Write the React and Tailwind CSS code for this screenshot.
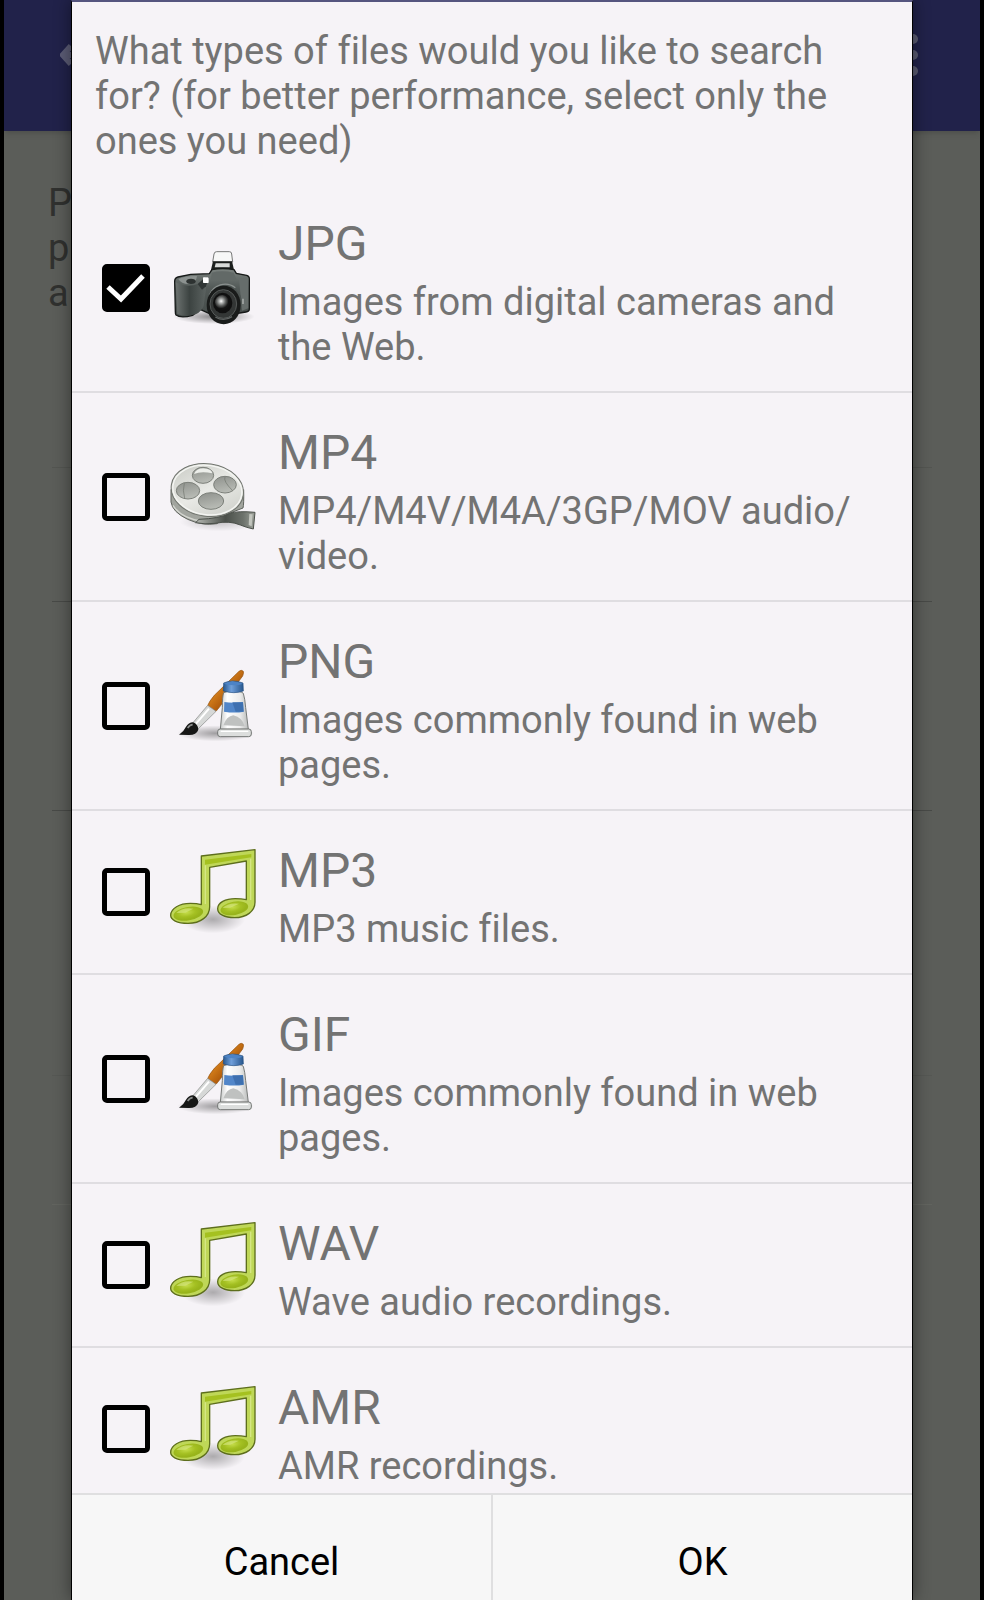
import { useState } from 'react'

const FILE_TYPES = [
  { id: 'jpg', name: 'JPG', icon: 'camera', description: 'Images from digital cameras and the Web.' },
  { id: 'mp4', name: 'MP4', icon: 'film', description: 'MP4/M4V/M4A/3GP/MOV audio/\u200bvideo.' },
  { id: 'png', name: 'PNG', icon: 'paint', description: 'Images commonly found in web pages.' },
  { id: 'mp3', name: 'MP3', icon: 'music', description: 'MP3 music files.' },
  { id: 'gif', name: 'GIF', icon: 'paint', description: 'Images commonly found in web pages.' },
  { id: 'wav', name: 'WAV', icon: 'music', description: 'Wave audio recordings.' },
  { id: 'amr', name: 'AMR', icon: 'music', description: 'AMR recordings.' },
]

function CameraIcon() {
  return (
    <svg viewBox="273 75 258 258" className="size-[86px] shrink-0" aria-hidden="true">
      <defs>
        <radialGradient id="cam-shadow">
          <stop offset="0" stopColor="#000" stopOpacity="0.45" />
          <stop offset="1" stopColor="#000" stopOpacity="0" />
        </radialGradient>
        <linearGradient id="cam-body" x1="0" x2="0" y1="0" y2="1">
          <stop offset="0" stopColor="#7b827f" />
          <stop offset="0.4" stopColor="#535a58" />
          <stop offset="1" stopColor="#444b49" />
        </linearGradient>
        <linearGradient id="cam-grip" x1="0" x2="1" y1="0" y2="0">
          <stop offset="0" stopColor="#6d7371" />
          <stop offset="0.45" stopColor="#3c4341" />
          <stop offset="1" stopColor="#5c6361" />
        </linearGradient>
        <radialGradient id="cam-glass" cx="0.42" cy="0.42">
          <stop offset="0" stopColor="#fff" />
          <stop offset="0.25" stopColor="#b8bab9" />
          <stop offset="0.6" stopColor="#626463" />
          <stop offset="1" stopColor="#141414" />
        </radialGradient>
      </defs>
      <ellipse cx="405" cy="290" rx="122" ry="22" fill="url(#cam-shadow)" />
      <path d="M405 102q1-7 8-7h38q7 0 7 7l3 24h-60z" fill="#f7f7f7" stroke="#777" strokeWidth="3" />
      <path d="M402 124h57l7 30h-71z" fill="#1c1f1e" />
      <path d="M410 130h42v12h-45z" fill="#d8dad9" />
      <path
        d="M287 184q0-10 10-13l38-8 56-2 8-12q32-7 66 0l7 11 31 6q8 2 8 10v92q0 7-10 8l-38 6-60 4-40-18-22 18q-36 10-50-1-2-2-2-10z"
        fill="url(#cam-body)"
        stroke="#161918"
        strokeWidth="4"
      />
      <path d="M290 187q34 18 68 4l24 8-8 58q-8 19-24 26-32 8-55-1z" fill="url(#cam-grip)" />
      <path d="M298 177q20-10 56-9-2 20-20 24-26 2-36-15z" fill="#8c9290" />
      <ellipse cx="336" cy="184" rx="14" ry="8" fill="#2d3231" />
      <path d="M356 192l24-21h10l-9 28-12 10z" fill="#303635" />
      <path d="M398 158q30-8 66 0l9 21h-77z" fill="#626967" />
      <path d="M480 176l28-3v92l-19 7z" fill="#666d6b" />
      <path d="M492 236v16" stroke="#a3a8a6" strokeWidth="5" />
      <rect x="372" y="172" width="17" height="17" rx="2" fill="#fff" />
      <circle cx="436" cy="246" r="52" fill="#4c5351" />
      <path d="M391 226a50 50 0 0 1 78-23" fill="none" stroke="#8b918f" strokeWidth="4" />
      <ellipse cx="434" cy="255" rx="51" ry="58" fill="#191b1a" />
      <ellipse cx="433" cy="252" rx="40" ry="43" fill="#333635" stroke="#555958" strokeWidth="3" />
      <ellipse cx="431" cy="249" rx="29" ry="31" fill="#101010" />
      <circle cx="430" cy="247" r="22" fill="url(#cam-glass)" />
      <path d="M409 291q25 15 50-1" fill="none" stroke="#606463" strokeWidth="4" />
    </svg>
  )
}

function FilmIcon() {
  return (
    <svg viewBox="273 72 258 258" className="size-[86px] shrink-0" aria-hidden="true">
      <defs>
        <linearGradient id="film-face" x1="0" x2="1" y1="0" y2="1">
          <stop offset="0" stopColor="#c6c8c2" />
          <stop offset="0.5" stopColor="#e9eae6" />
          <stop offset="1" stopColor="#c9cbc5" />
        </linearGradient>
        <linearGradient id="film-hole" x1="0" x2="0.3" y1="0" y2="1">
          <stop offset="0" stopColor="#8e918c" />
          <stop offset="1" stopColor="#b7bab4" />
        </linearGradient>
        <linearGradient id="film-strip" x1="0" x2="1" y1="0" y2="0">
          <stop offset="0" stopColor="#b5b8b2" />
          <stop offset="0.5" stopColor="#4a4f49" />
          <stop offset="0.8" stopColor="#6d726c" />
          <stop offset="1" stopColor="#9b9f98" />
        </linearGradient>
        <radialGradient id="film-shadow">
          <stop offset="0" stopColor="#000" stopOpacity="0.2" />
          <stop offset="1" stopColor="#000" stopOpacity="0" />
        </radialGradient>
      </defs>
      <ellipse cx="420" cy="276" rx="118" ry="28" fill="url(#film-shadow)" />
      <path
        d="M276 178v38q4 30 50 52 44 20 88 13l34-30 44-17q3-10 2-55z"
        fill="#a2a59f"
        stroke="#60645e"
        strokeWidth="3"
      />
      <path d="M282 226q25 40 90 48" fill="none" stroke="#d4d6d0" strokeWidth="4" />
      <path
        d="M360 268q60-2 92-18 25-8 76-3l-5 50q-20-4-39-12-32-14-76-5-31 4-58-2z"
        fill="url(#film-strip)"
        stroke="#4b504a"
        strokeWidth="3"
      />
      <path d="M511 252l10 1-3 36-9-4z" fill="#c2c5be" />
      <ellipse
        cx="385"
        cy="180"
        rx="109"
        ry="79"
        fill="url(#film-face)"
        stroke="#70746e"
        strokeWidth="3"
        transform="rotate(8 385 180)"
      />
      <ellipse
        cx="385"
        cy="180"
        rx="104"
        ry="74"
        fill="none"
        stroke="#f5f6f3"
        strokeWidth="4"
        transform="rotate(8 385 180)"
      />
      <g fill="url(#film-hole)" stroke="#7c807a" strokeWidth="3">
        <ellipse cx="372" cy="136" rx="32" ry="24" />
        <ellipse cx="438" cy="164" rx="34" ry="25" />
        <ellipse cx="327" cy="182" rx="35" ry="25" />
        <ellipse cx="396" cy="213" rx="38" ry="25" />
      </g>
      <path d="M345 132q22-10 55-2-2-13-27-15-22 0-28 17z" fill="#eceeea" />
      <path d="M316 160q-6 20 1 45M438 141q-6 12 22 40" fill="none" stroke="#6f746d" strokeWidth="2" />
    </svg>
  )
}

function PaintIcon() {
  return (
    <svg viewBox="273 69 258 258" className="size-[86px] shrink-0" aria-hidden="true">
      <defs>
        <radialGradient id="paint-shadow">
          <stop offset="0" stopColor="#000" stopOpacity="0.35" />
          <stop offset="1" stopColor="#000" stopOpacity="0" />
        </radialGradient>
        <linearGradient id="paint-handle" x1="0" x2="1" y1="0" y2="1">
          <stop offset="0.3" stopColor="#e08a20" />
          <stop offset="0.7" stopColor="#a34f06" />
        </linearGradient>
        <linearGradient id="paint-tube" x1="0" x2="1" y1="0" y2="0">
          <stop offset="0" stopColor="#c9cbca" />
          <stop offset="0.25" stopColor="#fff" />
          <stop offset="0.7" stopColor="#ececec" />
          <stop offset="1" stopColor="#b9bbba" />
        </linearGradient>
        <linearGradient id="paint-cap" x1="0" x2="1" y1="0" y2="0">
          <stop offset="0" stopColor="#285990" />
          <stop offset="0.4" stopColor="#6f9fda" />
          <stop offset="1" stopColor="#28578e" />
        </linearGradient>
      </defs>
      <ellipse cx="410" cy="280" rx="116" ry="24" fill="url(#paint-shadow)" />
      <path
        d="M480 94q7-6 13 0 2 5-2 14l-70 94-10 12-25-17q4-12 20-31z"
        fill="url(#paint-handle)"
        stroke="#93500d"
        strokeWidth="2"
      />
      <path d="M386 196l25 18-57 56-18-15z" fill="#d6d8d7" stroke="#858886" strokeWidth="2" />
      <path d="M390 206l-44 51" stroke="#fff" strokeWidth="6" />
      <path d="M300 284q14-8 20-22 9-15 22-15 15 5 16 22-6 17-30 16z" fill="#161716" />
      <path d="M326 264q7-10 15-10" fill="none" stroke="#8c8e8d" strokeWidth="5" />
      <path
        d="M434 158q10-5 28-5 24 0 31 7 5 17 7 43l8 65h-84l6-65q0-34 4-45z"
        fill="url(#paint-tube)"
        stroke="#777a78"
        strokeWidth="3"
      />
      <path d="M436 186q27 5 56 0l2 29q-26 5-59 0z" fill="#5186c9" />
      <path d="M460 187h32l2 28h-24z" fill="#3e70b0" />
      <path d="M433 256q10-28 30-30 27 6 34 33z" fill="#bfc1c0" />
      <path d="M434 129q26-12 58 0l1 24q-27 10-60 0z" fill="url(#paint-cap)" stroke="#245084" strokeWidth="2" />
      <path d="M434 131q26-12 58 0-24 9-58 0z" fill="#4d83c6" />
      <rect x="416" y="267" width="101" height="23" rx="8" fill="#dcdedd" stroke="#727573" strokeWidth="3" />
      <path d="M425 274h83" stroke="#fff" strokeWidth="4" />
    </svg>
  )
}

function MusicIcon() {
  return (
    <svg viewBox="273 87 258 258" className="size-[86px] shrink-0" aria-hidden="true">
      <defs>
        <radialGradient id="music-shadow">
          <stop offset="0" stopColor="#000" stopOpacity="0.3" />
          <stop offset="1" stopColor="#000" stopOpacity="0" />
        </radialGradient>
        <radialGradient id="music-head" cx="0.45" cy="0.4">
          <stop offset="0" stopColor="#c4dc4a" />
          <stop offset="0.6" stopColor="#a4c022" />
          <stop offset="1" stopColor="#98b41b" />
        </radialGradient>
      </defs>
      <ellipse cx="402" cy="298" rx="96" ry="42" fill="url(#music-shadow)" />
      <path
        d="M367 108l161-19v158c0 27-26 46-61 46-31 0-51-11-51-27 0-18 23-30 53-30 12 0 23 1 33 3V123l-110 19v118c0 29-27 50-65 50-33 0-52-10-52-24 0-21 27-36 59-36 12 0 23 1 33 4z"
        fill="#bfd758"
        stroke="#5d6e1c"
        strokeWidth="4"
        strokeLinejoin="round"
      />
      <path d="M378 119l139-17v10l-139 22z" fill="#a5c120" />
      <ellipse cx="328" cy="281" rx="45" ry="20" fill="url(#music-head)" transform="rotate(-10 328 281)" />
      <ellipse cx="466" cy="265" rx="42" ry="20" fill="url(#music-head)" transform="rotate(-10 466 265)" />
      <path d="M379 136v116M515 116v124" stroke="#d5e684" strokeWidth="4" />
      <path d="M292 279q18-18 51-13l-24 12zM431 264q16-17 49-13l-26 12z" fill="#dbe98a" opacity="0.6" />
    </svg>
  )
}

const ICONS = { camera: CameraIcon, film: FilmIcon, paint: PaintIcon, music: MusicIcon }

function FileTypeRow({ type, checked, onToggle }) {
  const Icon = ICONS[type.icon]

  return (
    <li className="border-b-2 border-[#dfdde1] last:border-b-0">
      <label className="flex items-center pr-10 pl-[30px]">
        <span className="relative size-12 shrink-0">
          <input
            type="checkbox"
            className="block size-12 appearance-none rounded-[5px] border-[5px] border-black checked:bg-black"
            checked={checked}
            onChange={() => onToggle(type.id)}
          />
          {checked && (
            <svg viewBox="0 0 48 48" className="pointer-events-none absolute inset-0 text-white" aria-hidden="true">
              <path d="M6 23l13 12 22-23" fill="none" stroke="currentColor" strokeWidth="5" />
            </svg>
          )}
        </span>
        <span className="ml-5 flex">
          <Icon />
        </span>
        <span className="ml-[22px] flex flex-col gap-2 pt-8 pb-[21px] text-[#737373]">
          <span className="text-5xl leading-[56px]">{type.name}</span>
          <span className="text-[38px] leading-[45px]">{type.description}</span>
        </span>
      </label>
    </li>
  )
}

function Backdrop() {
  return (
    <div className="h-full overflow-hidden bg-[#5b5d59]" aria-hidden="true">
      <div className="flex h-[131px] items-start justify-between bg-[#21224a] pt-8 pr-[61px] pl-14 shadow-md">
        <svg viewBox="0 0 48 48" className="size-12 text-[#5b5c75]">
          <path d="M11 14L3 23l8 9M4 23h40" fill="none" stroke="currentColor" strokeWidth="6" />
        </svg>
        <svg viewBox="0 0 12 48" className="h-12 w-3 text-[#5b5c72]">
          <circle cx="6" cy="7" r="5" fill="currentColor" />
          <circle cx="6" cy="23" r="5" fill="currentColor" />
          <circle cx="6" cy="39" r="5" fill="currentColor" />
        </svg>
      </div>
      <div className="px-12 pt-[50px]">
        <p className="-ml-1 h-[286px] text-[38px] leading-[45px] text-[#30312f]">
          P
          <br />
          p
          <br />
          a
        </p>
        <hr className="mb-[133px] border-[#535551]" />
        <hr className="mb-[208px] border-[#484a47]" />
        <hr className="mb-[264px] border-[#484a47]" />
        <hr className="mb-[128px] border-[#565854]" />
        <hr className="border-[#62645f]" />
      </div>
    </div>
  )
}

export default function App() {
  const [selected, setSelected] = useState(['jpg'])

  const toggle = (id) =>
    setSelected((ids) => (ids.includes(id) ? ids.filter((x) => x !== id) : [...ids, id]))

  return (
    <div className="relative h-screen overflow-hidden bg-black px-1 font-[Roboto,sans-serif] [font-variant-ligatures:none]">
      <Backdrop />

      <div className="absolute inset-0 flex px-[71px]">
        <form
          role="dialog"
          aria-labelledby="dialog-title"
          className="flex min-w-0 flex-1 flex-col border-x border-t-2 border-x-black border-t-[#55557f] bg-[#f6f3f7] shadow-[0_0_16px_rgba(0,0,0,0.45)]"
          onSubmit={(e) => e.preventDefault()}
        >
          <h1 id="dialog-title" className="px-[23px] pt-[27px] pb-5 text-[38px] leading-[45px] text-[#737373]">
            What types of files would you like to search for? (for better performance, select only the ones you need)
          </h1>

          <ul className="min-h-0 flex-1 overflow-hidden">
            {FILE_TYPES.map((type) => (
              <FileTypeRow key={type.id} type={type} checked={selected.includes(type.id)} onToggle={toggle} />
            ))}
          </ul>

          <div className="flex divide-x-2 divide-[#dfdfe0] border-t-2 border-[#dfdfe0] bg-[#f7f7f7] text-[38px] leading-[45px] text-black">
            <button type="button" className="flex-1 pt-[45px] pb-[15px]">
              Cancel
            </button>
            <button type="submit" className="flex-1 pt-[45px] pb-[15px]">
              OK
            </button>
          </div>
        </form>
      </div>
    </div>
  )
}
